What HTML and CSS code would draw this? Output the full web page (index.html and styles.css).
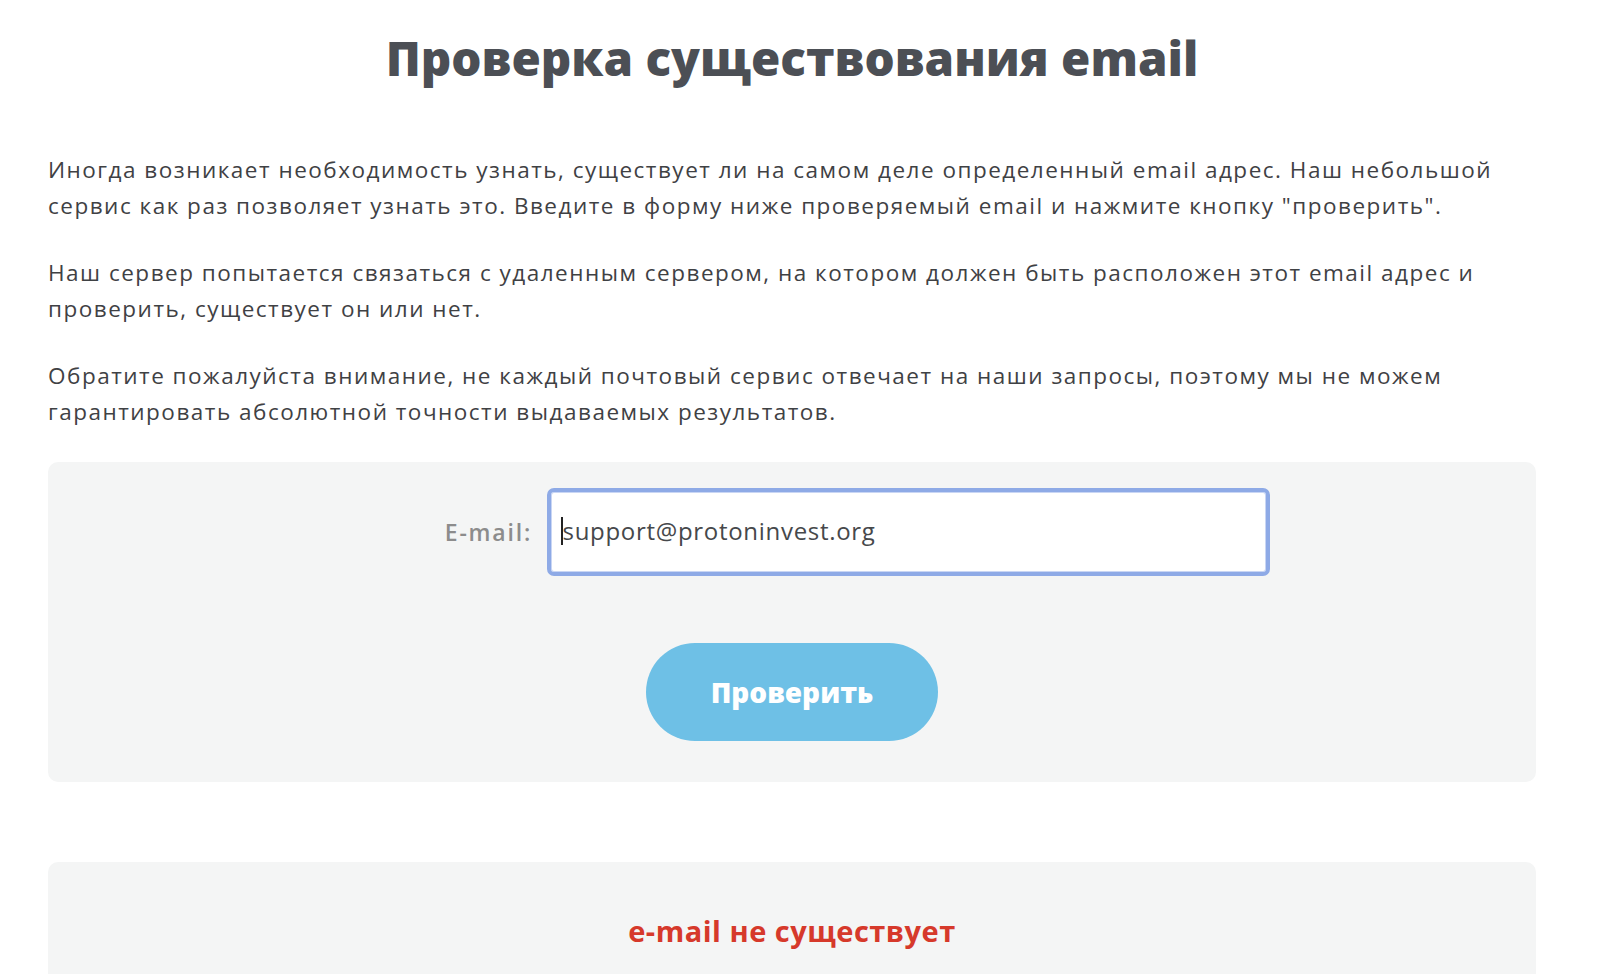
FILE: index.html
```html
<!DOCTYPE html>
<html lang="ru">
<head>
<meta charset="utf-8">
<title>Проверка существования email</title>
<link rel="stylesheet" href="styles.css">
</head>
<body>
<main class="page">
  <h1 class="title">Проверка существования email</h1>
  <p class="text">Иногда возникает необходимость узнать, существует ли на самом деле определенный email адрес. Наш небольшой сервис как раз позволяет узнать это. Введите в форму ниже проверяемый email и нажмите кнопку "проверить".</p>
  <p class="text">Наш сервер попытается связаться с удаленным сервером, на котором должен быть расположен этот email адрес и проверить, существует он или нет.</p>
  <p class="text">Обратите пожалуйста внимание, не каждый почтовый сервис отвечает на наши запросы, поэтому мы не можем гарантировать абсолютной точности выдаваемых результатов.</p>
  <form class="check-box">
    <div class="row">
      <label class="label" for="email">E-mail:</label>
      <div class="input"><span class="caret"></span>support@protoninvest.org</div>
    </div>
    <div class="actions">
      <button type="button" class="btn">Проверить</button>
    </div>
  </form>
  <section class="result-box">
    <div class="result">e-mail не существует</div>
  </section>
</main>
</body>
</html>
```

FILE: styles.css
```css
html, body {
  margin: 0;
  padding: 0;
  background: #ffffff;
  overflow: hidden;
}
.page {
  width: 1488px;
  margin-left: 48px;
  font-family: "Open Sans", "Noto Sans", sans-serif;
  color: #3f4144;
}
.title {
  margin: 0;
  padding-top: 29px;
  font-family: "Open Sans", "Noto Sans", sans-serif;
  font-weight: 800;
  font-size: 47.5px;
  line-height: 58px;
  text-align: center;
  color: #4c4f55;
}
.text {
  margin: 65px 0 0;
  font-size: 22.5px;
  line-height: 36px;
  font-weight: 500;
  letter-spacing: 1.5px;
}
.text + .text {
  margin-top: 31px;
}
.check-box {
  margin-top: 32px;
  background: #f4f5f5;
  border-radius: 10px;
  padding: 26px 0 41px;
}
.row {
  display: flex;
  align-items: center;
  gap: 15px;
}
.label {
  width: 484px;
  text-align: right;
  font-size: 23px;
  font-weight: 600;
  letter-spacing: 1.8px;
  color: #8c8c8c;
}
.input {
  box-sizing: border-box;
  width: 723px;
  height: 88px;
  background: #fff;
  border: 4px solid #8eaae6;
  border-radius: 7px;
  box-shadow: inset 0 0 0 1px #c9d6f4;
  display: flex;
  align-items: center;
  padding-left: 10px;
  padding-bottom: 3px;
  font-size: 24px;
  letter-spacing: 0.7px;
  color: #46484b;
}
.caret {
  display: inline-block;
  width: 1.5px;
  height: 28px;
  background: #222;
}
.actions {
  display: flex;
  justify-content: center;
  margin-top: 67px;
}
.btn {
  width: 292px;
  height: 98px;
  border: none;
  border-radius: 49px;
  background: #6ec0e6;
  color: #fff;
  font-family: "Open Sans", "Noto Sans", sans-serif;
  font-weight: 800;
  font-size: 28px;
  cursor: pointer;
}
.result-box {
  margin-top: 80px;
  background: #f4f5f5;
  border-radius: 10px 10px 0 0;
  height: 140px;
  padding-top: 49px;
  box-sizing: border-box;
}
.result {
  text-align: center;
  font-size: 29px;
  font-weight: 700;
  letter-spacing: 0.5px;
  color: #d6392b;
}
```
